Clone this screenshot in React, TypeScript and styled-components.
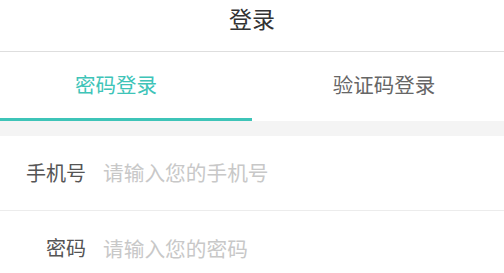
import React from "react";
import styled, { createGlobalStyle } from "styled-components";

const Global = createGlobalStyle`
  html, body { margin: 0; padding: 0; background: #fff; }
  body { font-family: "Noto Sans CJK SC", "Noto Sans", sans-serif; }
  * { box-sizing: border-box; }
`;

const Page = styled.div`
  width: 504px;
  display: flex;
  flex-direction: column;
  background: #fff;
`;

const Header = styled.header`
  height: 52px;
  display: flex;
  justify-content: center;
  align-items: flex-start;
  padding-top: 2px;
  border-bottom: 1px solid #dedede;
  font-size: 23px;
  line-height: 32px;
  color: #333;
`;

const Tabs = styled.nav`
  display: flex;
  height: 69px;
`;

const Tab = styled.div<{ $active?: boolean }>`
  flex: 0 0 50%;
  display: flex;
  justify-content: center;
  align-items: center;
  padding-bottom: 2px;
  font-size: 20.5px;
  color: ${(p) => (p.$active ? "#3ec4b8" : "#666")};
  border-bottom: 3px solid ${(p) => (p.$active ? "#3ec4b8" : "transparent")};
`;

const TabText = styled.span<{ $shift: number }>`
  margin-left: ${(p) => (p.$shift > 0 ? p.$shift * 2 : 0)}px;
  margin-right: ${(p) => (p.$shift < 0 ? -p.$shift * 2 : 0)}px;
`;

const Gap = styled.div`
  height: 15px;
  background: #f4f4f4;
`;

const Row = styled.label<{ $last?: boolean }>`
  display: flex;
  align-items: center;
  height: 75px;
  padding-bottom: 2px;
  border-bottom: ${(p) => (p.$last ? "none" : "1px solid #ececec")};
`;

const Label = styled.span`
  width: 86px;
  text-align: right;
  font-size: 20px;
  color: #555;
  flex-shrink: 0;
`;

const Input = styled.input`
  flex: 1;
  margin-left: 17px;
  border: none;
  outline: none;
  padding: 0;
  font-family: "Noto Sans CJK SC", "Noto Sans", sans-serif;
  font-size: 20.7px;
  color: #333;
  background: transparent;
  &::placeholder { color: #c8c8c8; }
`;

export default function App() {
  return (
    <Page>
      <Global />
      <Header>登录</Header>
      <Tabs>
        <Tab $active>
          <TabText $shift={-10}>密码登录</TabText>
        </Tab>
        <Tab>
          <TabText $shift={6}>验证码登录</TabText>
        </Tab>
      </Tabs>
      <Gap />
      <Row>
        <Label>手机号</Label>
        <Input placeholder="请输入您的手机号" />
      </Row>
      <Row $last>
        <Label>密码</Label>
        <Input type="password" placeholder="请输入您的密码" />
      </Row>
    </Page>
  );
}
